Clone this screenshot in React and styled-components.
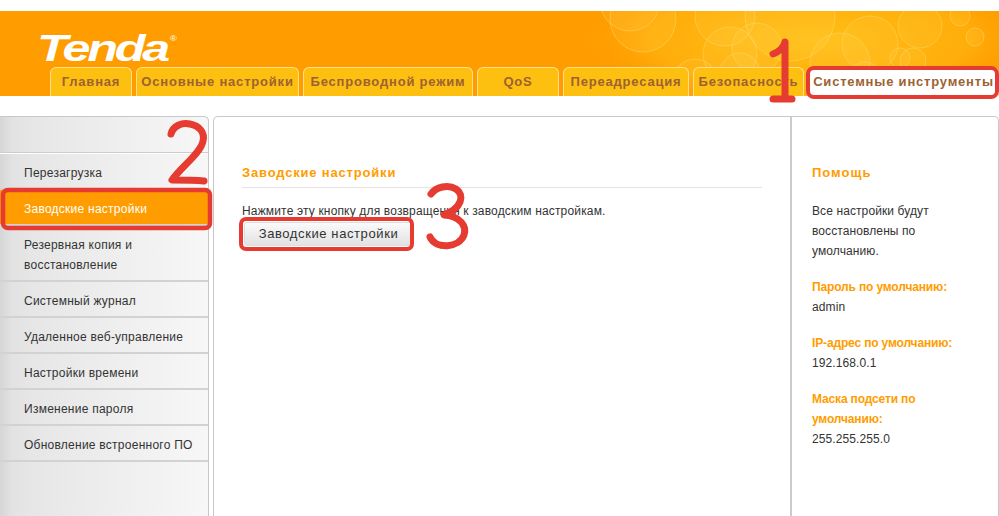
import React from "react";
import styled, { createGlobalStyle } from "styled-components";

const Global = createGlobalStyle`
  html, body { margin: 0; padding: 0; background: #fff; height: 516px; overflow: hidden; }
  body { font-family: "Liberation Sans", Arial, sans-serif; color: #333; }
`;
const Page = styled.div`position: relative; width: 999px; height: 516px; overflow: hidden; padding-top: 11px; box-sizing: border-box;`;
const Header = styled.header`
  position: relative; height: 85px; background: #ff9c00; overflow: hidden;
  display: flex; flex-direction: column; justify-content: flex-end;
`;
const Bubbles = styled.svg`position: absolute; left: 500px; top: 0; width: 499px; height: 85px;`;
const Logo = styled.div`
  position: absolute; left: 37px; top: 16px; color: #fff; font: italic 700 37px/44px "Liberation Sans", sans-serif;
  letter-spacing: -2.4px; transform: scaleX(1.36); transform-origin: left center;
  sup { font-size: 7px; font-weight: 400; letter-spacing: 0; vertical-align: 20px; line-height: 0; margin-left: 2px; }
`;
const Tabs = styled.nav`position: relative; display: flex; gap: 4px; padding-left: 50px; height: 29px;`;
const Tab = styled.a`
  width: ${p => p.$w}px; box-sizing: border-box; height: 30px; text-align: center; white-space: nowrap;
  background: ${p => p.$active ? "#fff" : "#fdc010"}; color: #9c6232;
  border: 1px solid #ffdf8e; border-bottom: 0; border-radius: 6px 6px 0 0;
  font: 700 13px/28px "Liberation Sans", sans-serif; letter-spacing: 0.8px;
`;
const Body = styled.div`display: flex; gap: 4px; margin-top: 20px; height: 400px;`;
const Sidebar = styled.aside`
  width: 209px; box-sizing: border-box; flex: none; border: 1px solid #c8c8c8; border-left: 0; border-bottom: 0;
  border-radius: 0 5px 0 0; background: linear-gradient(90deg, #d6d6d6 0, #e2e2e2 12px, #e6e6e6 30px, #f7f7f7 100%);
  padding-top: 36px;
`;
const MenuList = styled.ul`list-style: none; margin: 0; padding: 0; border-top: 1px solid #fff; box-shadow: 0 -1px 0 #ccc;`;
const MenuItem = styled.li`
  padding: 9px 10px 5px 24px; border-bottom: 2px solid #d2d2d2; font-size: 12px; line-height: 20px; letter-spacing: 0.25px;
  color: ${p => p.$active ? "#fff" : "#333"}; background: ${p => p.$active ? "#ff9c00" : "transparent"};
`;
const Main = styled.main`
  flex: 1; display: flex; border: 1px solid #c8c8c8; border-bottom: 0; border-radius: 5px 5px 0 0;
`;
const Content = styled.section`width: 578px; box-sizing: border-box; flex: none; padding: 47px 28px 0 28px; border-right: 2px solid #ccc;`;
const Title = styled.h2`
  margin: 0; padding-bottom: 6px; border-bottom: 1px solid #e3e3e3; color: #ff9c00; font-size: 13px; line-height: 17px; letter-spacing: 0.82px; font-weight: 700;
`;
const Para = styled.p`margin: 15px 0 0; font-size: 12px; line-height: 16px; letter-spacing: 0.16px; color: #333;`;
const ResetButton = styled.button`
  display: block; margin: 3px 0 0 2px; width: 169px; height: 24px; border: 1px solid #ddd; border-radius: 3px; padding: 0;
  background: linear-gradient(#fafafa, #e2e2e2); color: #333; font: 13px/22px "Liberation Sans", sans-serif; letter-spacing: 0.6px;
`;
const Help = styled.aside`flex: 1; padding: 47px 40px 0 20px; font-size: 12px; line-height: 20px; letter-spacing: 0.1px; color: #333;`;
const HelpTitle = styled.h3`margin: 0 0 19px; color: #ff9c00; font-size: 13px; line-height: 18px; letter-spacing: 1px;`;
const HelpText = styled.p`margin: 0 0 16px;`;
const HelpLabel = styled.strong`display: block; color: #ff9c00; font-size: 12px; letter-spacing: -0.15px;`;
const Marks = styled.svg`position: absolute; left: 0; top: 0; width: 999px; height: 516px; pointer-events: none;`;

const items = ["Перезагрузка", "Заводские настройки", "Резервная копия и восстановление", "Системный журнал", "Удаленное веб-управление", "Настройки времени", "Изменение пароля", "Обновление встроенного ПО"];
const tabs = [["Главная", 82], ["Основные настройки", 163], ["Беспроводной режим", 170], ["QoS", 82], ["Переадресация", 126], ["Безопасность", 111], ["Системные инструменты", 191, true]];
const circles = [[143,8,33],[130,-10,30],[230,43,27],[257,37,25],[225,5,30],[290,5,45],[340,52,30],[370,33,28],[420,15,22],[400,47,10],[413,50,13],[475,26,9],[240,62,20],[195,70,22],[365,68,17],[310,75,15],[460,5,10]];

export default function App() {
  return (
    <Page>
      <Global />
      <Header>
        <Bubbles viewBox="0 0 499 85">
          <defs>
            <radialGradient id="glow" cx="0.55" cy="0.45" r="0.55">
              <stop offset="0" stopColor="#ffc21a" stopOpacity="0.95" />
              <stop offset="0.7" stopColor="#ffb40e" stopOpacity="0.7" />
              <stop offset="1" stopColor="#ff9c00" stopOpacity="0" />
            </radialGradient>
          </defs>
          <rect x="80" y="-30" width="419" height="130" fill="url(#glow)" />
          {circles.map(([x, y, r], i) => (
            <circle key={i} cx={x} cy={y} r={r} fill="#ffe060" fillOpacity="0.12" stroke="#ffe27a" strokeOpacity="0.4" />
          ))}
        </Bubbles>
        <Logo>Tenda<sup>®</sup></Logo>
        <Tabs>
          {tabs.map(([t, w, active]) => <Tab key={t} $w={w} $active={active}>{t}</Tab>)}
        </Tabs>
      </Header>
      <Body>
        <Sidebar>
          <MenuList>
            {items.map((t, i) => <MenuItem key={t} $active={i === 1}>{t}</MenuItem>)}
          </MenuList>
        </Sidebar>
        <Main>
          <Content>
            <Title>Заводские настройки</Title>
            <Para>Нажмите эту кнопку для возвращения к заводским настройкам.</Para>
            <ResetButton>Заводские настройки</ResetButton>
          </Content>
          <Help>
            <HelpTitle>Помощь</HelpTitle>
            <HelpText>Все настройки будут восстановлены по умолчанию.</HelpText>
            <HelpText><HelpLabel>Пароль по умолчанию:</HelpLabel>admin</HelpText>
            <HelpText><HelpLabel>IP-адрес по умолчанию:</HelpLabel>192.168.0.1</HelpText>
            <HelpText><HelpLabel>Маска подсети по умолчанию:</HelpLabel>255.255.255.0</HelpText>
          </Help>
        </Main>
      </Body>
      <Marks viewBox="0 0 999 516" fill="none" stroke="#e63b30" strokeLinecap="round" strokeLinejoin="round">
        <rect x="808" y="68" width="189" height="29" rx="6" strokeWidth="4" />
        <rect x="3" y="190" width="207" height="38" rx="5" strokeWidth="4.5" />
        <rect x="241" y="219" width="171" height="30" rx="5" strokeWidth="4" />
        <path d="M773 54 C779 52 784 47 785 42 L785 99 M773 99 L792 99" strokeWidth="7" />
        <path d="M171 134 C173 126 182 122 190 124 C200 126 205 133 203 141 C201 153 182 166 172 180 C184 180 194 180 204 181" strokeWidth="7" />
        <path d="M431 194 C436 187 448 184 456 189 C465 195 462 208 444 215 C460 216 467 226 464 235 C459 248 436 250 430 237" strokeWidth="7" />
      </Marks>
    </Page>
  );
}
